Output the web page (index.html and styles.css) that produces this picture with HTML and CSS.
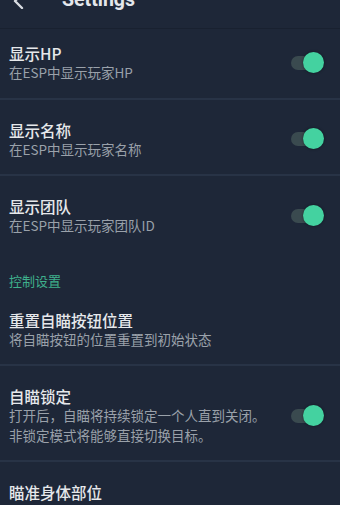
FILE: index.html
```html
<!DOCTYPE html>
<html lang="zh">
<head>
<meta charset="utf-8">
<title>Settings</title>
<link rel="stylesheet" href="styles.css">
</head>
<body>
<div class="screen">
  <header class="topbar">
    <svg class="back" width="14" height="16" viewBox="0 0 14 16"><path d="M10 1 L3 8 L10 15" fill="none" stroke="#d8dce2" stroke-width="2.4" stroke-linecap="round" stroke-linejoin="round"/></svg>
    <span class="title">Settings</span>
  </header>

  <div class="row first">
    <div class="text">
      <div class="name">显示HP</div>
      <div class="desc">在ESP中显示玩家HP</div>
    </div>
    <div class="toggle"><span class="track"></span><span class="knob"></span></div>
  </div>
  <div class="sep"></div>

  <div class="row">
    <div class="text">
      <div class="name">显示名称</div>
      <div class="desc">在ESP中显示玩家名称</div>
    </div>
    <div class="toggle"><span class="track"></span><span class="knob"></span></div>
  </div>
  <div class="sep"></div>

  <div class="row">
    <div class="text">
      <div class="name">显示团队</div>
      <div class="desc">在ESP中显示玩家团队ID</div>
    </div>
    <div class="toggle"><span class="track"></span><span class="knob"></span></div>
  </div>

  <div class="section">控制设置</div>

  <div class="row after-section">
    <div class="text">
      <div class="name">重置自瞄按钮位置</div>
      <div class="desc">将自瞄按钮的位置重置到初始状态</div>
    </div>
  </div>
  <div class="sep"></div>

  <div class="row">
    <div class="text">
      <div class="name">自瞄锁定</div>
      <div class="desc">打开后，自瞄将持续锁定一个人直到关闭。<br>非锁定模式将能够直接切换目标。</div>
    </div>
    <div class="toggle"><span class="track"></span><span class="knob"></span></div>
  </div>
  <div class="sep"></div>

  <div class="row">
    <div class="text">
      <div class="name">瞄准身体部位</div>
    </div>
  </div>
</div>
</body>
</html>
```
FILE: styles.css
```css
html, body {
  margin: 0;
  padding: 0;
  background: #1e2738;
}
body {
  font-family: "Noto Sans CJK SC", "Noto Sans", sans-serif;
  width: 340px;
  height: 505px;
  overflow: hidden;
}
.screen {
  display: flex;
  flex-direction: column;
}
.topbar {
  height: 28px;
  border-bottom: 1px solid #192130;
  display: flex;
  align-items: flex-start;
  overflow: hidden;
}
.back {
  margin: -7px 0 0 12px;
}
.title {
  margin: -11px 0 0 36px;
  font-family: "Roboto", "Liberation Sans", sans-serif;
  font-weight: 700;
  font-size: 19.5px;
  line-height: 22px;
  color: #e4e7ec;
}
.row {
  display: flex;
  align-items: center;
  padding: 20px 16px 15px 9px;
}
.row.first {
  padding-top: 14px;
}
.row.after-section {
  padding-top: 11px;
}
.text {
  flex: 1;
  display: flex;
  flex-direction: column;
}
.name {
  font-size: 15.5px;
  line-height: 20px;
  font-weight: 500;
  color: #e6e8eb;
}
.desc {
  font-size: 13.5px;
  line-height: 19.5px;
  color: #9aa1aa;
}
.sep {
  height: 2px;
  background: #283346;
}
.section {
  padding: 22px 9px 10px;
  font-size: 13px;
  line-height: 16px;
  color: #3fb08c;
}
.toggle {
  position: relative;
  width: 33px;
  height: 22px;
  flex: none;
}
.track {
  position: absolute;
  left: 0;
  right: 4px;
  top: 4px;
  height: 14px;
  border-radius: 7px;
  background: #3a4a4f;
}
.knob {
  position: absolute;
  right: 0;
  top: 0;
  width: 21px;
  height: 21px;
  border-radius: 50%;
  background: #44d2a0;
  box-shadow: 0 0 3px rgba(0,0,0,0.45);
}
```
